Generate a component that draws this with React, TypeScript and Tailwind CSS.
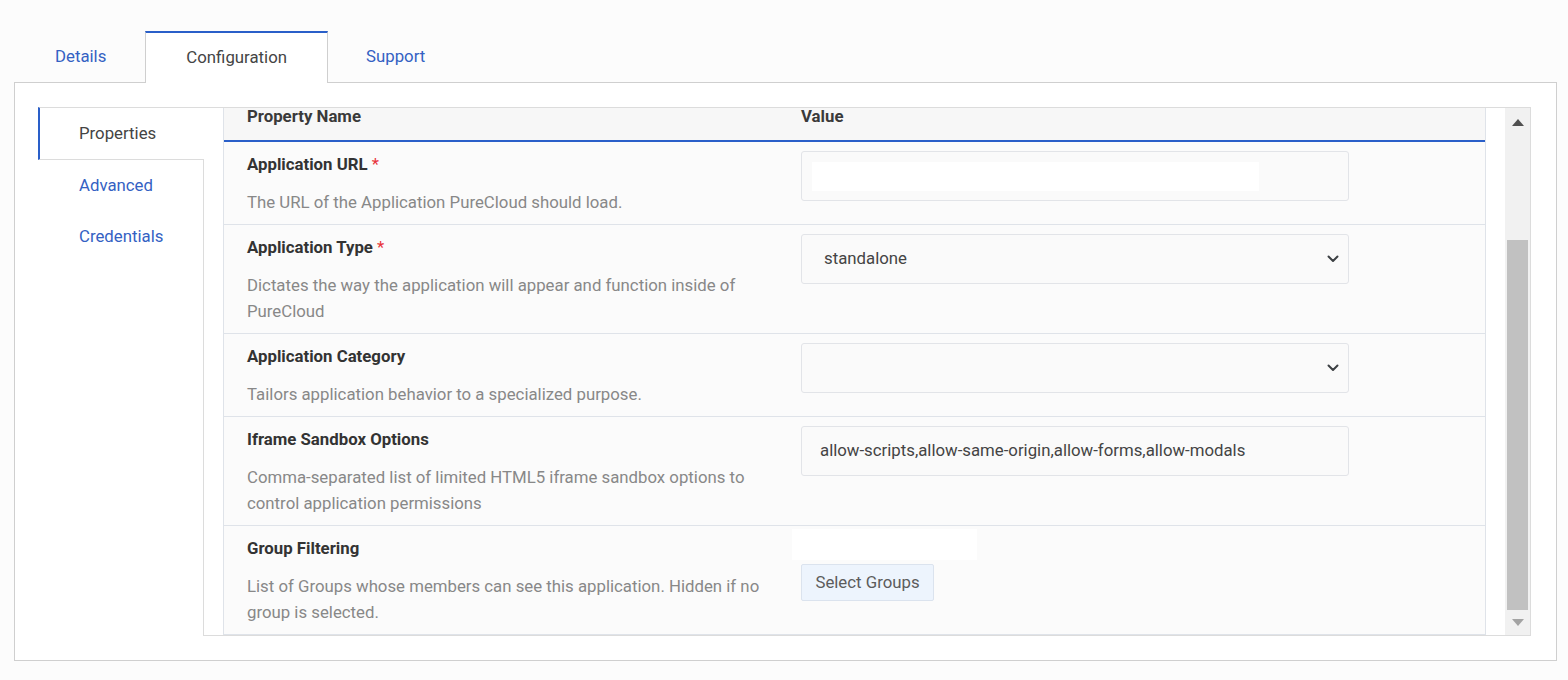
import React from "react";

const Chevron = () => (
  <svg width="12" height="8" viewBox="0 0 12 8" className="shrink-0">
    <path d="M1.5 1.5 L6 6 L10.5 1.5" fill="none" stroke="#3c4043" strokeWidth="2" strokeLinecap="round" strokeLinejoin="round" />
  </svg>
);

function Row({
  title,
  required,
  desc,
  children,
}: {
  title: string;
  required?: boolean;
  desc: string;
  children: React.ReactNode;
}) {
  return (
    <div className="flex bg-[#fbfbfb] border-b border-[#dfe3e9]">
      <div className="w-[554px] shrink-0 pl-[23px] pr-[10px] pt-[9px] pb-[9px]">
        <div className="text-[16.8px] leading-[26px] font-bold text-[#333]">
          {title}
          {required && <span className="font-normal text-[#e8333a]"> *</span>}
        </div>
        <div className="mt-[12px] text-[16.8px] leading-[26px] text-[#888]">{desc}</div>
      </div>
      <div className="flex-1 pl-[23px]">{children}</div>
    </div>
  );
}

export default function App() {
  return (
    <div className="min-h-screen bg-[#fcfcfc] font-['Roboto',sans-serif] pt-[31px]">
      {/* Tabs */}
      <div className="ml-[15px] flex h-[51px] items-stretch relative z-10">
        <div className="flex items-center pl-[40px] pr-[39px] text-[16.8px] text-[#3461c3]">Details</div>
        <div className="flex items-center px-[40px] text-[16.8px] text-[#444] bg-white border-t-2 border-t-[#2a5fc9] border-x border-x-[#cfcfcf] h-[52px] -mb-px">
          Configuration
        </div>
        <div className="flex items-center px-[38px] text-[16.8px] text-[#3461c3]">Support</div>
      </div>

      {/* Panel */}
      <div className="ml-[14px] w-[1543px] h-[579px] bg-white border border-[#cfcfcf] pl-[23px] pr-[25px] pt-[24px] pb-[24px] flex">
        {/* Left nav */}
        <div className="w-[166px] shrink-0 flex flex-col">
          <div className="h-[53px] border-l-2 border-l-[#2a5fc9] border-y border-y-[#dcdcdc] flex items-center pl-[39px] text-[16.8px] text-[#444]">
            Properties
          </div>
          <div className="flex-1 border-r border-r-[#dcdcdc] flex flex-col">
            <div className="h-[51px] flex items-center pl-[41px] text-[16.8px] text-[#3461c3]">Advanced</div>
            <div className="h-[51px] flex items-center pl-[41px] text-[16.8px] text-[#3461c3]">Credentials</div>
          </div>
        </div>

        {/* Right container */}
        <div className="w-[1327px] shrink-0 border-y border-r border-[#dcdcdc] pl-[19px] flex">
          {/* Table */}
          <div className="w-[1263px] shrink-0 border-x border-[#dfe3e9] flex flex-col">
            <div className="h-[32px] bg-[#f7f7f7] flex text-[16.8px] leading-[16px] font-bold text-[#3a3a3a]">
              <div className="w-[554px] pl-[23px]">Property Name</div>
              <div className="pl-[23px]">Value</div>
            </div>
            <div className="h-[2px] bg-[#2a5fc9]" />

            <Row title="Application URL" required desc="The URL of the Application PureCloud should load.">
              <div className="mt-[9px] w-[548px] h-[50px] border border-[#e2e4e8] rounded-[3px] bg-[#fafafa] flex items-center pl-[10px]">
                <div className="w-[447px] h-[29px] bg-white" />
              </div>
            </Row>

            <Row
              title="Application Type"
              required
              desc="Dictates the way the application will appear and function inside of PureCloud"
            >
              <div className="mt-[9px] w-[548px] h-[50px] border border-[#e2e4e8] rounded-[3px] bg-[#fafafa] flex items-center justify-between pl-[22px] pr-[9px] text-[16.8px] text-[#444]">
                <span>standalone</span>
                <Chevron />
              </div>
            </Row>

            <Row title="Application Category" desc="Tailors application behavior to a specialized purpose.">
              <div className="mt-[9px] w-[548px] h-[50px] border border-[#e2e4e8] rounded-[3px] bg-[#fafafa] flex items-center justify-end pr-[9px]">
                <Chevron />
              </div>
            </Row>

            <Row
              title="Iframe Sandbox Options"
              desc="Comma-separated list of limited HTML5 iframe sandbox options to control application permissions"
            >
              <div className="mt-[9px] w-[548px] h-[50px] border border-[#e2e4e8] rounded-[3px] bg-[#fafafa] flex items-center pl-[18px] text-[16.8px] text-[#444]">
                allow-scripts,allow-same-origin,allow-forms,allow-modals
              </div>
            </Row>

            <Row
              title="Group Filtering"
              desc="List of Groups whose members can see this application. Hidden if no group is selected."
            >
              <div className="pt-[3px]">
                <div className="-ml-[9px] w-[185px] h-[31px] bg-white" />
                <button className="mt-[4px] h-[37px] w-[133px] bg-[#edf4fd] border border-[#dbe3ee] rounded-[2px] text-[16.8px] text-[#5c5c5c] flex items-center justify-center">
                  Select Groups
                </button>
              </div>
            </Row>
          </div>

          {/* gap */}
          <div className="w-[19px] shrink-0" />

          {/* Scrollbar */}
          <div className="w-[25px] shrink-0 bg-[#f1f1f1] flex flex-col">
            <div className="h-[28px] flex items-center justify-center">
              <div className="w-0 h-0 border-l-[6px] border-r-[6px] border-b-[7px] border-l-transparent border-r-transparent border-b-[#505050]" />
            </div>
            <div className="h-[104px]" />
            <div className="h-[370px] mx-[2px] bg-[#c1c1c1]" />
            <div className="flex-1 flex items-center justify-center">
              <div className="w-0 h-0 border-l-[6px] border-r-[6px] border-t-[7px] border-l-transparent border-r-transparent border-t-[#a3a3a3]" />
            </div>
          </div>
        </div>
      </div>
    </div>
  );
}
